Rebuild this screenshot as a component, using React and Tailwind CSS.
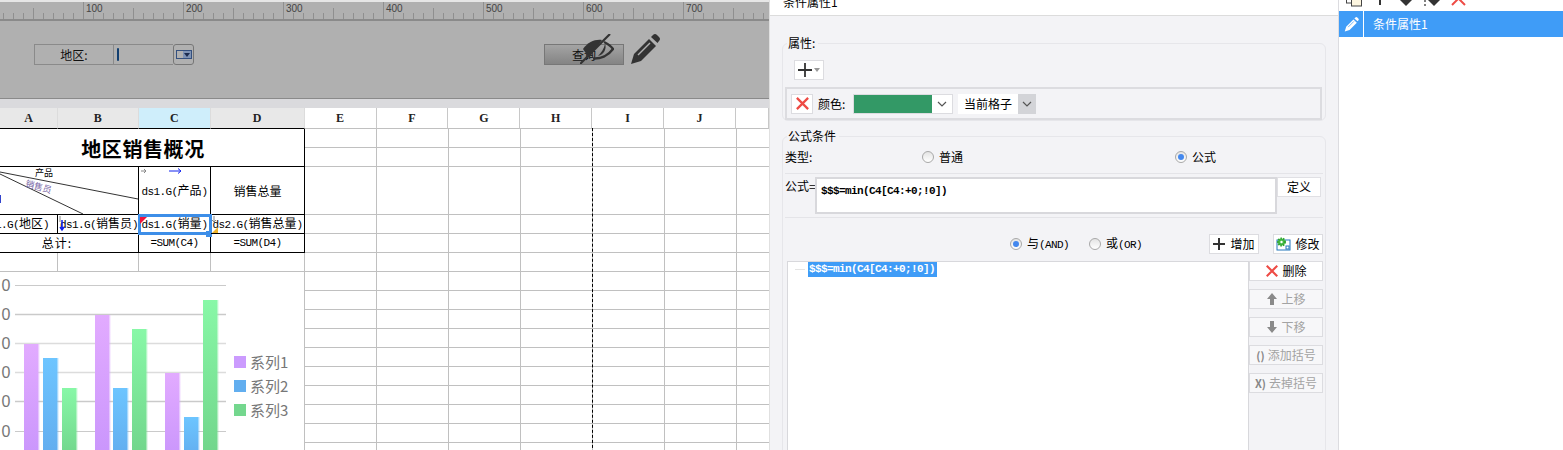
import React from 'react';

const BLANK_COLS = ['E', 'F', 'G', 'H', 'I', 'J', ''];
const BLANK_WIDTHS = ['w-[72px]', 'w-[72px]', 'w-[72px]', 'w-[72px]', 'w-[72px]', 'w-[72px]', 'w-[33px]'];
const ROW_HEIGHTS = ['h-[19px]', 'h-[19px]', 'h-[48px]', 'h-[19px]', 'h-[19px]', 'h-[19px]', 'h-[19px]', 'h-[19px]', 'h-[19px]', 'h-[19px]', 'h-[19px]', 'h-[19px]', 'h-[19px]', 'h-[19px]', 'h-[19px]', 'h-[19px]'];

const BARS = [
    { x: 24, y: 344, fill: 'url(#purple)' },
    { x: 43, y: 358, fill: 'url(#blue)' },
    { x: 62, y: 388, fill: 'url(#green)' },
    { x: 95, y: 315, fill: 'url(#purple)' },
    { x: 113, y: 388, fill: 'url(#blue)' },
    { x: 132, y: 329, fill: 'url(#green)' },
    { x: 165, y: 373, fill: 'url(#purple)' },
    { x: 184, y: 417, fill: 'url(#blue)' },
    { x: 203, y: 300, fill: 'url(#green)' },
];

// Latin text squeezed to the half-width cell of the CJK font
const M = ({ children }) => (
    <span className="font-['Liberation_Mono',monospace] text-[11px] tracking-[-0.6px]">{children}</span>
);

const Ruler = () => (
    <svg width="769" height="17" className="block">
        {Array.from({ length: 79 }, (_, i) => {
            const x = 3 + i * 10;
            const major = (i + 2) % 10 === 0;
            const mid = (i + 2) % 5 === 0;
            return <line key={i} x1={x + 0.5} x2={x + 0.5} y1={major ? 0 : mid ? 6 : 11} y2={17} stroke="#8f8f8f" />;
        })}
        {[100, 200, 300, 400, 500, 600, 700].map((n, i) => (
            <text key={n} x={86 + i * 100} y={10} fontSize="10" fill="#444" fontFamily="Liberation Sans">{n}</text>
        ))}
    </svg>
);

const EyeSlash = () => (
    <svg width="34" height="30" viewBox="0 0 34 30" className="absolute left-[35px] -top-[11px]">
        <path d="M3 15C8 8 15 5 22 6L9 24C7 21 5 18 3 15Z" fill="#333" />
        <path d="M24 8C28 10 31 12 33 15C28 22 20 25 13 24.500" fill="none" stroke="#333" strokeWidth="2.500" />
        <path d="M18 22C21 19 24 15 25 10C27 14 24 21 18 22Z" fill="#333" />
        <line x1="30" y1="0" x2="0" y2="30" stroke="#333" strokeWidth="2.200" />
    </svg>
);

const Pencil = ({ color = '#333', slit = '#b0b0b0', className = '' }) => (
    <svg viewBox="0 0 30 31" className={className}>
        <path d="M1 30L4 20L19 5L26 12L11 27Z" fill={color} />
        <line x1="8" y1="21" x2="20" y2="9" stroke={slit} strokeWidth="1.500" />
        <path d="M21 3L23 1Q25 -1 27 1L29 3Q31 5 29 7L27.500 9Z" fill={color} />
    </svg>
);

const RedX = ({ size = 16 }) => (
    <svg width={size} height={size} viewBox="0 0 16 16">
        <path d="M2 2L14 14M14 2L2 14" stroke="#ee4b45" strokeWidth="2.400" />
    </svg>
);

const Chevron = ({ color = '#555' }) => (
    <svg width="10" height="6" viewBox="0 0 10 6">
        <path d="M1 1L5 5L9 1" fill="none" stroke={color} strokeWidth="1.200" />
    </svg>
);

const Radio = ({ on }) => (
    <span className="flex h-[12px] w-[12px] shrink-0 items-center justify-center rounded-full border border-[#a8a8a8] bg-gradient-to-b from-[#e4e4e4] to-white">
        {on && <span className="h-[6px] w-[6px] rounded-full bg-[#4488ee]" />}
    </span>
);

const SideButton = ({ icon, label, off }) => (
    <div className={`flex h-[20px] w-[74px] items-center justify-center gap-[3px] border border-[#dcdce0] text-[12px] ${off ? 'bg-[#f7f7f9] text-[#a3a3a3]' : 'bg-white text-black'}`}>
        {icon}
        <span className="whitespace-nowrap">{label}</span>
    </div>
);

const ArrowIcon = ({ down }) => (
    <svg width="12" height="14" viewBox="0 0 12 14" className={down ? 'rotate-180' : ''}>
        <path d="M6 1L11 7H8V13H4V7H1Z" fill="#8a8a8a" />
    </svg>
);

const HeaderCell = ({ label, width, tone }) => (
    <div className={`flex h-full items-center justify-center border-r border-b ${width} ${tone} font-['Liberation_Serif',serif] text-[12px] font-bold text-[#222]`}>
        {label}
    </div>
);

const Chart = () => (
    <div className="col-span-4 flex h-[179px] overflow-hidden border-r border-[#c0c0c0] bg-white">
        <svg width="230" height="179" viewBox="0 272 230 179" className="shrink-0">
            <defs>
                <linearGradient id="purple" x1="0" y1="0" x2="0" y2="1"><stop offset="0" stopColor="#e2abff" /><stop offset="1" stopColor="#c995fc" /></linearGradient>
                <linearGradient id="blue" x1="0" y1="0" x2="0" y2="1"><stop offset="0" stopColor="#6dc5ff" /><stop offset="1" stopColor="#62acee" /></linearGradient>
                <linearGradient id="green" x1="0" y1="0" x2="0" y2="1"><stop offset="0" stopColor="#88f8a7" /><stop offset="1" stopColor="#70d48a" /></linearGradient>
            </defs>
            {[285.5, 314.5, 343.5, 372.5, 401.5, 431.5].map((y, i) => (
                <g key={y}>
                    <line x1="15" x2="226" y1={y} y2={y} stroke={i === 2 || i === 3 ? '#dcdcdc' : '#cacaca'} strokeWidth={i === 0 || i === 5 ? 1 : 1.500} />
                    <text x="1.500" y={y + 5.500} fontSize="16" fill="#777" fontFamily="Liberation Sans">0</text>
                </g>
            ))}
            {BARS.map((b) => (
                <g key={b.x}>
                    <rect x={b.x} y={b.y} width="14.500" height={460 - b.y} fill={b.fill} />
                    <rect x={b.x + 14.500} y={b.y} width="1" height={460 - b.y} fill={b.fill} opacity="0.400" />
                </g>
            ))}
        </svg>
        <div className="ml-[4px] mt-[78px] flex flex-col text-[15px] leading-[24px] text-[#777]">
            {[['系列1', 'bg-[#cb9bfe]'], ['系列2', 'bg-[#62aeef]'], ['系列3', 'bg-[#74d78e]']].map(([name, color]) => (
                <div key={name} className="flex h-[24px] items-center gap-[4px]">
                    <span className={`h-[12px] w-[12px] ${color}`} />
                    <span>{name}</span>
                </div>
            ))}
        </div>
    </div>
);

const Report = () => (
    <div className="grid w-[305px] shrink-0 grid-cols-[58px_81px_72px_94px] grid-rows-[38px_48px_19px_19px_19px_179px] text-[12px] text-black">
        <div className="col-span-4 flex items-center justify-center border-r border-b border-black pr-[18px] pt-[2px] text-[20px] font-bold tracking-[0.6px]">地区销售概况</div>

        <div className="relative col-span-2 overflow-hidden border-r border-b border-black">
            <svg width="138" height="47" className="absolute left-0 top-0">
                <line x1="0" y1="5" x2="138" y2="32" stroke="#333" />
                <line x1="0" y1="7" x2="83" y2="47" stroke="#333" />
            </svg>
            <span className="absolute left-[35px] top-[0px] text-[9px] leading-[12px]">产品</span>
            <span className="absolute left-[25px] top-[14px] rotate-[16deg] text-[9px] leading-[12px] text-[#7c6aa8]">销售员</span>
            <span className="absolute left-0 top-[28px] h-[8px] w-[1px] bg-[#3344cc]" />
        </div>
        <div className="relative flex items-center justify-center border-r border-b border-black whitespace-nowrap">
            <span><M>ds1.G(</M>产品<M>)</M></span>
            <svg width="44" height="8" viewBox="0 0 44 8" className="absolute left-[2px] top-0">
                <path d="M0 4H5M3 2L5 4L3 6" fill="none" stroke="#888" />
                <path d="M28 4H39M37 1.500L40 4L37 6.500" fill="none" stroke="#1122ee" />
            </svg>
        </div>
        <div className="flex items-center justify-center border-r border-b border-black">销售总量</div>

        <div className="flex items-center justify-end overflow-hidden border-r border-b border-black whitespace-nowrap pr-[8px]">
            <span><M>1.G(</M>地区<M>)</M></span>
        </div>
        <div className="relative flex items-center justify-center border-r border-b border-black whitespace-nowrap pl-[2px]">
            <span><M>ds1.G(</M>销售员<M>)</M></span>
            <svg width="8" height="16" viewBox="0 0 8 16" className="absolute left-0 top-[1px]">
                <path d="M2 0V6" stroke="#888" />
                <path d="M4 4V14M2 11L4 14L6 11" fill="none" stroke="#1122ee" strokeWidth="1.500" />
            </svg>
        </div>
        <div className="relative flex items-center justify-center border-r border-b border-black whitespace-nowrap">
            <span><M>ds1.G(</M>销量<M>)</M></span>
            <div className="absolute -left-[1px] -top-[1px] h-[21px] w-[74px] border-[3px] border-[#3d8ee8]" />
            <div className="absolute left-[1px] top-[2px] h-0 w-0 border-t-[7px] border-r-[7px] border-t-[#f0143c] border-r-transparent" />
            <div className="absolute -right-[2px] top-[16px] h-[6px] w-[6px] bg-[#3d8ee8]" />
        </div>
        <div className="relative flex items-center justify-center border-r border-b border-black whitespace-nowrap">
            <span><M>ds2.G(</M>销售总量<M>)</M></span>
            <svg width="6" height="7" viewBox="0 0 6 7" className="absolute left-[1px] top-[1px]">
                <path d="M2 0V6M0 4L2 6L4 4" fill="none" stroke="#888" />
            </svg>
            <div className="absolute left-[1px] top-[12px] h-0 w-0 border-b-[6px] border-l-[6px] border-b-[#f0b429] border-l-transparent" />
        </div>

        <div className="col-span-2 flex items-center justify-center border-r border-b border-black pr-[24px] tracking-[1px]">总计:</div>
        <div className="flex items-center justify-center border-r border-b border-black"><M>=SUM(C4)</M></div>
        <div className="flex items-center justify-center border-r border-b border-black"><M>=SUM(D4)</M></div>

        <div className="border-r border-b border-[#c0c0c0]" />
        <div className="border-r border-b border-[#c0c0c0]" />
        <div className="border-r border-b border-[#c0c0c0]" />
        <div className="border-r border-b border-[#c0c0c0]" />

        <Chart />
    </div>
);

const Sheet = () => (
    <div className="relative flex shrink-0 flex-col">
        <div className="flex h-[21px] shrink-0">
            <HeaderCell label="A" width="w-[58px]" tone="bg-[#e8e8e8] border-r-[#dcdcdc] border-b-black" />
            <HeaderCell label="B" width="w-[81px]" tone="bg-[#e8e8e8] border-r-[#dcdcdc] border-b-black" />
            <HeaderCell label="C" width="w-[72px]" tone="bg-[#cfeefb] border-r-[#dcdcdc] border-b-black" />
            <HeaderCell label="D" width="w-[94px]" tone="bg-[#e8e8e8] border-r-[#dcdcdc] border-b-black" />
            {BLANK_COLS.map((c, i) => (
                <HeaderCell key={i} label={c} width={BLANK_WIDTHS[i]} tone="bg-white border-r-[#c8c8c8] border-b-[#c0c0c0]" />
            ))}
        </div>
        <div className="flex">
            <Report />
            <div className="flex flex-col">
                {ROW_HEIGHTS.map((h, r) => (
                    <div key={r} className={`flex shrink-0 ${h}`}>
                        {BLANK_WIDTHS.map((w, c) => (
                            <div key={c} className={`${w} border-r border-b border-[#c0c0c0]`} />
                        ))}
                    </div>
                ))}
            </div>
        </div>
        {/* page break marker */}
        <div className="absolute left-[592px] top-[20px] h-[330px] border-l border-dashed border-black" />
    </div>
);

const Designer = () => (
    <div className="flex h-[450px] w-[770px] shrink-0 flex-col overflow-hidden border-r border-[#e0e0e0] bg-white">
        <div className="h-[2px] shrink-0 bg-[#e6e6e6]" />
        <div className="h-[17px] shrink-0 overflow-hidden bg-[#b0b0b0]"><Ruler /></div>
        <div className="flex h-[80px] shrink-0 items-start border-t-2 border-b border-[#8a8a8a] bg-[#b0b0b0] pl-[34px] pt-[23px] text-[12px] text-[#111]">
            <div className="flex h-[21px] w-[80px] items-center justify-center border border-[#8a8a8a]">地区:</div>
            <div className="flex h-[21px] w-[59px] items-center border-y border-[#8a8a8a] pl-[3px]">
                <span className="h-[13px] w-[2px] rounded-sm bg-[#123f70]" />
            </div>
            <div className="flex h-[21px] w-[21px] items-center justify-center rounded-[3px] border border-[#777]">
                <span className="flex h-[9px] w-[16px] border border-[#34507f]">
                    <span className="w-[6px]" />
                    <span className="flex flex-1 items-center justify-center bg-[#7f93b5]">
                        <span className="h-0 w-0 border-x-[3px] border-t-[4px] border-x-transparent border-t-[#1c2c50]" />
                    </span>
                </span>
            </div>
            <div className="relative ml-[350px] flex h-[21px] w-[80px] items-center justify-center border border-[#777] bg-gradient-to-b from-[#a4a4a4] to-[#848484]">
                查询
                <EyeSlash />
                <Pencil className="absolute left-[85px] -top-[11px] h-[31px] w-[30px]" />
            </div>
        </div>
        <div className="h-[9px] shrink-0 bg-[#dadadd]" />
        <Sheet />
    </div>
);

const Group = ({ title, className, children }) => (
    <div className={`relative mx-[12px] w-[544px] rounded-md border border-[#e6e6ea] ${className}`}>
        <span className="absolute -top-[9px] left-[4px] bg-[#f3f3f6] pl-[1px] pr-[3px] text-[12px] leading-[16px]">{title}</span>
        {children}
    </div>
);

const Conditions = () => (
    <div className="h-[450px] w-[569px] shrink-0 overflow-hidden border-r border-[#dcdce0] bg-[#f3f3f6] text-[12px] text-black">
        <div className="h-[16px] overflow-hidden border-b border-[#dcdcdc] bg-white pl-[13px]">
            <div className="-mt-[5px] leading-[14px]">条件属性1</div>
        </div>

        <Group title="属性:" className="mt-[27px] h-[78px]">
            <div className="ml-[11px] mt-[16px] flex h-[20px] w-[30px] items-center justify-center gap-[2px] border border-[#dcdce0] bg-white">
                <svg width="14" height="14" viewBox="0 0 14 14"><path d="M0 7H14M7 0V14" stroke="#333" strokeWidth="1.800" /></svg>
                <span className="h-0 w-0 border-x-[3px] border-t-[4px] border-x-transparent border-t-[#999]" />
            </div>
            <div className="ml-[2px] mt-[7px] flex h-[33px] w-[537px] items-center border-2 border-[#dcdce0] pl-[4px]">
                <div className="flex h-[20px] w-[22px] items-center justify-center border border-[#dcdce0] bg-white"><RedX size={15} /></div>
                <span className="ml-[5px] w-[35px]">颜色:</span>
                <div className="flex h-[20px] w-[100px] items-center border border-[#dcdce0] bg-white">
                    <div className="h-full w-[78px] bg-[#339966]" />
                    <div className="flex flex-1 justify-center"><Chevron /></div>
                </div>
                <div className="ml-[5px] flex h-[20px] w-[78px] items-center bg-white">
                    <span className="w-[60px] text-center">当前格子</span>
                    <div className="flex h-full flex-1 items-center justify-center bg-[#d3d4d8]"><Chevron /></div>
                </div>
            </div>
        </Group>

        <Group title="公式条件" className="mt-[15px] h-[330px]">
            <div className="mx-[2px] grid h-[37px] grid-cols-[137px_253px_auto] items-center border-b border-[#e4e4e8] pt-[4px]">
                <span>类型:</span>
                <span className="flex items-center gap-[5px]"><Radio />普通</span>
                <span className="flex items-center gap-[5px]"><Radio on />公式</span>
            </div>
            <div className="mx-[2px] flex h-[44px] items-start border-b border-[#e4e4e8] pt-[3px]">
                <span className="w-[30px] whitespace-nowrap pt-[1px] leading-[16px]">公式=</span>
                <div className="h-[37px] w-[462px] border-2 border-[#d8d8dc] bg-white pl-[4px] pt-[2px] font-semibold leading-[16px]"><M>$$$=min(C4[C4:+0;!0])</M></div>
                <div className="flex h-[20px] w-[44px] items-center justify-center border border-[#e0e0e4] bg-white">定义</div>
            </div>
            <div className="mx-[2px] flex h-[43px] items-start pl-[225px] pt-[16px]">
                <span className="flex h-[20px] w-[79px] items-center gap-[5px]"><Radio on /><span>与<M>(AND)</M></span></span>
                <span className="flex h-[20px] w-[120px] items-center gap-[5px]"><Radio /><span>或<M>(OR)</M></span></span>
                <div className="flex h-[20px] w-[50px] items-center justify-center gap-[5px] border border-[#dcdce0] bg-white">
                    <svg width="12" height="12" viewBox="0 0 12 12"><path d="M0 6H12M6 0V12" stroke="#333" strokeWidth="2" /></svg>
                    增加
                </div>
                <div className="ml-[14px] flex h-[20px] w-[50px] items-center justify-center gap-[4px] border border-[#dcdce0] bg-white">
                    <svg width="15" height="14" viewBox="0 0 15 14">
                        <rect x="1" y="3" width="13" height="10" fill="none" stroke="#2277bb" />
                        <circle cx="5.500" cy="5" r="3.500" fill="#44bb44" stroke="#2fa52f" strokeWidth="2" strokeDasharray="1.500 1" />
                        <circle cx="5.500" cy="5" r="1.200" fill="white" />
                        <rect x="10" y="9" width="3" height="3" fill="none" stroke="#2277bb" />
                    </svg>
                    修改
                </div>
            </div>
            <div className="ml-[4px] flex">
                <div className="h-[200px] w-[462px] border border-[#d8d8dc] bg-white">
                    <div className="flex h-[15px] items-center pl-[7px]">
                        <span className="h-px w-[10px] bg-[#e4e4e4]" />
                        <span className="ml-[3px] flex h-[15px] items-center bg-[#3f9cf7] pl-[1px] pr-[2px] font-semibold text-white"><M>$$$=min(C4[C4:+0;!0])</M></span>
                    </div>
                </div>
                <div className="flex flex-col gap-[8px]">
                    <SideButton icon={<RedX size={14} />} label="删除" />
                    <SideButton off icon={<ArrowIcon />} label="上移" />
                    <SideButton off icon={<ArrowIcon down />} label="下移" />
                    <SideButton off icon={<span className="text-[11px] font-bold text-[#888]">()</span>} label="添加括号" />
                    <SideButton off icon={<span className="text-[11px] font-bold text-[#888]">X)</span>} label="去掉括号" />
                </div>
            </div>
        </Group>
    </div>
);

const ListPane = () => (
    <div className="h-[450px] flex-1 bg-white">
        <div className="relative h-[11px] overflow-hidden">
            <svg width="140" height="11" viewBox="0 0 140 11" className="ml-[7px]">
                <rect x="0.500" y="-6" width="9" height="9" fill="none" stroke="#444" />
                <rect x="5.500" y="-4" width="10" height="10" fill="#fdf6e0" stroke="#444" />
                <path d="M34 -4V5" stroke="#333" strokeWidth="2" />
                <path d="M54 0H66L60 6Z" fill="#333" />
                <circle cx="79" cy="1" r="1" fill="#555" /><circle cx="79" cy="5" r="1" fill="#555" />
                <path d="M82 0H94L88 6Z" fill="#333" />
                <path d="M106 5L119 -8M119 5L106 -8" stroke="#ee4b45" strokeWidth="2" />
            </svg>
        </div>
        <div className="flex h-[26px] items-center bg-[#3f9cf7] text-[12px] text-white">
            <div className="flex h-full w-[25px] items-center justify-center border-r border-white">
                <Pencil color="white" slit="#3f9cf7" className="h-[15px] w-[15px]" />
            </div>
            <span className="ml-[9px]">条件属性1</span>
        </div>
    </div>
);

const App = () => (
    <div className="flex h-[450px] w-[1563px] overflow-hidden bg-white font-['Noto_Sans_CJK_SC','Liberation_Sans',sans-serif]">
        <Designer />
        <Conditions />
        <ListPane />
    </div>
);

export default App;
